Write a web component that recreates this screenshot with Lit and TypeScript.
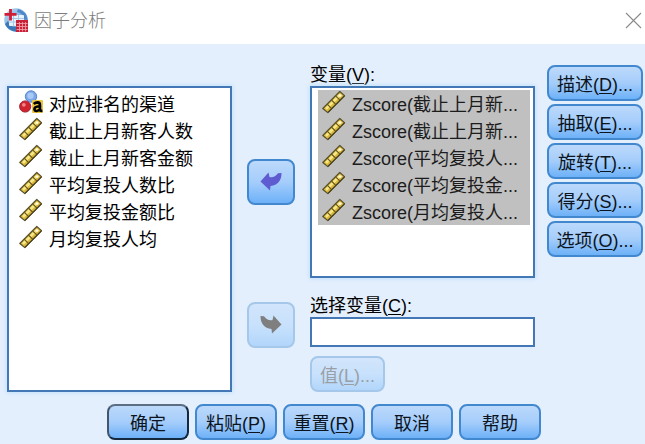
import { LitElement, html, css, svg, nothing } from "lit";
import { customElement, property } from "lit/decorators.js";

type Kind = "nominal" | "scale";

interface Variable {
  name: string;
  kind: Kind;
}

const SOURCE: Variable[] = [
  { name: "对应排名的渠道", kind: "nominal" },
  { name: "截止上月新客人数", kind: "scale" },
  { name: "截止上月新客金额", kind: "scale" },
  { name: "平均复投人数比", kind: "scale" },
  { name: "平均复投金额比", kind: "scale" },
  { name: "月均复投人均", kind: "scale" },
];

const CHOSEN: Variable[] = [
  { name: "Zscore(截止上月新...", kind: "scale" },
  { name: "Zscore(截止上月新...", kind: "scale" },
  { name: "Zscore(平均复投人...", kind: "scale" },
  { name: "Zscore(平均复投金...", kind: "scale" },
  { name: "Zscore(月均复投人...", kind: "scale" },
];

const OPTIONS = [
  ["描述", "D"],
  ["抽取", "E"],
  ["旋转", "T"],
  ["得分", "S"],
  ["选项", "O"],
];

const ACTIONS = [
  ["确定", ""],
  ["粘贴", "P"],
  ["重置", "R"],
  ["取消", ""],
  ["帮助", ""],
];

const rulerIcon = html`<svg width="24" height="24" viewBox="0 0 24 24" aria-hidden="true">
  <path d="M0.8 18.5 L17.8 1.5 L22.5 5.6 L5.8 22.6 Z" fill="#dcb93a" stroke="#57502c" stroke-width="1.2" stroke-linejoin="round" />
  <path d="M4 18.8 L18 4.8" stroke="#f6e888" stroke-width="2.4" fill="none" />
  <path d="M5.2 14.2 L9.6 18.6 M9.4 10 L13.8 14.4 M13.6 5.8 L18 10.2" stroke="#6b581c" stroke-width="1.2" fill="none" />
  <path d="M6 22.4 L22.6 5.8" stroke="#4a431f" stroke-width="1.2" fill="none" />
  <circle cx="18.2" cy="5.6" r="1.4" fill="#fffbe0" />
</svg>`;

const nominalIcon = html`<svg width="24" height="24" viewBox="0 0 24 24" aria-hidden="true">
  <circle cx="12" cy="6.5" r="5.7" fill="#7ba7e8" stroke="#5a86cc" />
  <circle cx="11.5" cy="5.8" r="3.2" fill="#a9c9f6" />
  <circle cx="6.2" cy="16.5" r="5.6" fill="#cf2430" stroke="#a82030" />
  <circle cx="4.8" cy="14.8" r="1.9" fill="#f08488" />
  <rect x="13" y="10" width="11" height="13" rx="1" fill="#e9c53f" />
  <path d="M14.8 14 Q16.5 12.4 18.5 12.4 Q21 12.5 21 15.2 V20 Q21.1 21 23.4 20.8 M20.3 16.3 Q15.4 16.6 15.4 19.2 Q15.6 21.2 17.8 21 Q19.4 20.8 20.3 19.4" stroke="#000" stroke-width="2.6" fill="none" />
</svg>`;

const logoIcon = html`<svg width="24" height="24" viewBox="0 0 24 24" aria-hidden="true">
  <defs>
    <linearGradient id="globe" x1="0" y1="0" x2="1" y2="1">
      <stop offset="0" stop-color="#c3dcf4" />
      <stop offset="0.5" stop-color="#7fb0e2" />
      <stop offset="1" stop-color="#2f6cb0" />
    </linearGradient>
  </defs>
  <circle cx="12" cy="12" r="11.8" fill="url(#globe)" />
  <path d="M1 16 Q4 23 12 23.5 V19 Q6 19 4 13 Z" fill="#3a78b8" />
  <path d="M14 1 Q22 3 23 11 H20 Q19 5 13 4 Z" fill="#4c87c6" />
  <rect x="5" y="7" width="15" height="11" rx="1" fill="#e6f1fc" />
  <path d="M5 10.5 H20 M5 14 H20 M9.5 7 V18 M14.5 7 V18" stroke="#a9c8e8" stroke-width="1" />
  <path d="M6.5 1 V12.5 M0.5 6.3 H12.5" stroke="#d01c34" stroke-width="2.8" />
  <rect x="12" y="12" width="12" height="12" fill="#c92038" />
  <path d="M12.5 15.5 H23.5 M12.5 18.5 H23.5 M12.5 21.5 H23.5 M15.5 14 V23.5 M18.5 14 V23.5 M21.5 14 V23.5" stroke="#ee9ba5" stroke-width="0.9" />
</svg>`;

const arrowShape = svg`<path d="M0.5 9.5 L8.5 0.5 L9.5 5 Q14 6.5 18 1.2 L21.5 1 Q21.5 12.5 10.5 14 L10 18.5 Z" fill="currentColor" />`;

const label = (text: string, key: string, tail = "") =>
  html`${text}${key ? html`(<u>${key}</u>)` : nothing}${tail}`;

const shared = css`
  * {
    box-sizing: border-box;
  }
  button {
    height: 36px;
    padding: 3px 0 0;
    border: 2px solid #4188cf;
    border-radius: 8px;
    background: linear-gradient(#bcd9fb, #a5cdfb 50%, #6db1f8);
    color: #0c1420;
    font: inherit;
    line-height: 28px;
    white-space: nowrap;
  }
  button:disabled {
    border-color: #a5c8ea;
    background: linear-gradient(#d2e5fb, #c8e1fc 50%, #b2d6fb);
    color: #9a9fa6;
  }
  u {
    text-decoration-thickness: 1px;
    text-underline-offset: 2px;
  }
`;

@customElement("variable-list")
export class VariableList extends LitElement {
  @property({ attribute: false }) items: Variable[] = [];
  @property({ type: Boolean }) selected = false;
  @property() name = "";

  static styles = [
    shared,
    css`
      :host {
        display: block;
        min-width: 0;
        border: 2px solid #4377b5;
        background: #fff;
        box-shadow: 0 0 4px 1px #c3e2fb;
      }
      .list {
        margin: 0;
        padding: 2px 3px 2px 6px;
        list-style: none;
      }
      .row {
        display: flex;
        align-items: center;
        gap: 6px;
        height: 27px;
        padding: 0 4px;
        line-height: 24px;
        white-space: nowrap;
        overflow: hidden;
      }
      .row[aria-selected="true"] {
        background: #c0c0c0;
        color: #1c1c1c;
      }
      .row svg {
        flex: none;
        margin-bottom: 3px;
      }
      .name {
        padding-top: 2px;
      }
    `,
  ];

  render() {
    return html`<ul class="list" role="listbox" aria-multiselectable="true" aria-label=${this.name}>
      ${this.items.map(
        (v) => html`<li class="row" role="option" aria-selected=${this.selected ? "true" : "false"}>
          ${v.kind === "scale" ? rulerIcon : nominalIcon}<span class="name">${v.name}</span>
        </li>`
      )}
    </ul>`;
  }
}

@customElement("app-root")
export class AppRoot extends LitElement {
  static styles = [
    shared,
    css`
      :host {
        display: flex;
        flex-direction: column;
        min-height: 100vh;
        background: #e4effd;
        color: #000;
        font-family: "Liberation Sans", "Noto Sans CJK SC", sans-serif;
        font-size: 18px;
      }
      .titlebar {
        display: flex;
        align-items: center;
        gap: 6px;
        height: 44px;
        padding: 0 3px 4px 4px;
        background: #fff;
      }
      .title {
        flex: 1;
        margin: 0;
        padding-top: 2px;
        color: #7c7c7c;
        font-size: 18px;
        font-weight: 300;
        line-height: 24px;
      }
      .close {
        display: flex;
        align-items: center;
        height: 24px;
        padding: 0;
        border: 0;
        background: none;
        color: #8a8a8a;
      }
      .body {
        display: grid;
        grid-template-columns: minmax(0, 1fr) 48px minmax(0, 1fr) 93px;
        grid-template-rows: 22px 192px auto;
        column-gap: 15px;
        padding: 20px 2px 0 7px;
      }
      .source {
        grid-area: 2 / 1 / 4 / 2;
      }
      .caption {
        grid-area: 1 / 3;
      }
      .caption,
      .field {
        line-height: 22px;
        white-space: nowrap;
      }
      .chosen {
        grid-area: 2 / 3;
      }
      .move {
        display: flex;
        align-items: center;
        justify-content: center;
        width: 48px;
        height: 46px;
        padding: 0;
      }
      .add {
        grid-area: 2 / 2;
        align-self: center;
        color: #5f5bd0;
      }
      .pick {
        grid-area: 3 / 2;
        margin-top: 24px;
      }
      .move:disabled {
        color: #7f7f7f;
      }
      .filter {
        grid-area: 3 / 3;
        display: flex;
        flex-direction: column;
        align-items: flex-start;
        padding-top: 17px;
      }
      .text {
        width: 100%;
        height: 30px;
        margin-bottom: 9px;
        padding: 0 6px;
        border: 2px solid #4377b5;
        background: #fff;
        font: inherit;
      }
      .value {
        width: 75px;
      }
      .options {
        grid-area: 1 / 4 / 4 / 5;
        display: flex;
        flex-direction: column;
        gap: 3px;
        margin-left: -3px;
        padding-top: 1px;
      }
      .actions {
        display: flex;
        justify-content: center;
        gap: 6px;
        padding: 12px 0 4px 3px;
      }
      .action {
        width: 82px;
        padding-top: 4px;
      }
      .primary {
        border-color: #5c6e84 #14283e #14283e #44566c;
      }
    `,
  ];

  render() {
    return html`
      <header class="titlebar">
        ${logoIcon}
        <h1 class="title">因子分析</h1>
        <button class="close" aria-label="关闭">
          <svg width="17" height="17" viewBox="0 0 17 17" aria-hidden="true">
            <path d="M1 1 L16 16 M16 1 L1 16" stroke="currentColor" stroke-width="1.1" />
          </svg>
        </button>
      </header>
      <main class="body">
        <variable-list class="source" .items=${SOURCE} name="可用变量"></variable-list>
        <button class="move add" aria-label="移回变量">
          <svg width="22" height="20" viewBox="0 0 22 20" aria-hidden="true">${arrowShape}</svg>
        </button>
        <button class="move pick" aria-label="移入选择变量" disabled>
          <svg width="22" height="20" viewBox="0 0 22 20" aria-hidden="true">
            <g transform="translate(22 0) scale(-1 1)">${arrowShape}</g>
          </svg>
        </button>
        <span class="caption">${label("变量", "V", ":")}</span>
        <variable-list class="chosen" .items=${CHOSEN} selected name="变量"></variable-list>
        <section class="filter">
          <label class="field" for="select-variable">${label("选择变量", "C", ":")}</label>
          <input class="text" id="select-variable" type="text" />
          <button class="value" disabled>${label("值", "L", "...")}</button>
        </section>
        <nav class="options">
          ${OPTIONS.map(([text, key]) => html`<button>${label(text, key, "...")}</button>`)}
        </nav>
      </main>
      <footer class="actions">
        ${ACTIONS.map(
          ([text, key], i) => html`<button class="action ${i === 0 ? "primary" : ""}">${label(text, key)}</button>`
        )}
      </footer>
    `;
  }
}
